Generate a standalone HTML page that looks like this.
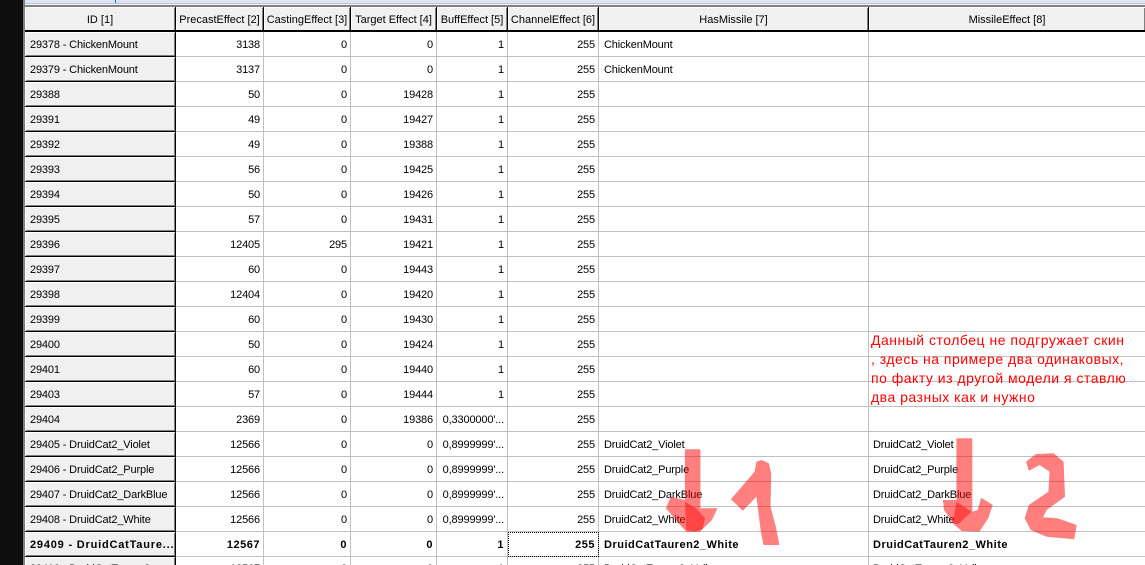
<!DOCTYPE html>
<html lang="ru"><head><meta charset="utf-8"><title>Spell Visual Table</title>
<style>
html,body{margin:0;padding:0;width:1145px;height:565px;overflow:hidden;background:#fff}
body{position:relative;font:11px/26px "Liberation Sans",sans-serif;color:#000}
#blk{position:absolute;left:0;top:0;width:23px;height:565px;background:#0f0f0f}
#edge{position:absolute;left:23px;top:0;width:2px;height:565px;background:#808080}
#top1{position:absolute;left:25px;top:0;width:1120px;height:3px;background:#dfe4f5}
#top2{position:absolute;left:25px;top:3px;width:1120px;height:1px;background:#bcc4dc}
#top3{position:absolute;left:25px;top:4px;width:1120px;height:1px;background:#f4f4f4}
#top4{position:absolute;left:23px;top:5px;width:1122px;height:2px;background:#808080}
#tick{position:absolute;left:115px;top:0;width:1px;height:3px;background:#2a6fd0}
.r{position:absolute;left:25px;width:1120px;height:25px;letter-spacing:-.15px}
.r span{position:absolute;top:0;height:24px;box-sizing:content-box;border-right:1px solid #c0c0c0;border-bottom:1px solid #c0c0c0;white-space:nowrap;overflow:hidden;text-align:right;padding:0 3px 0 0;background:#fff}
.r span:nth-child(1){left:0;width:145px;padding:0 0 0 5px;text-align:left;background:#f0f0f0;border-right:1px solid #000;border-bottom:1px solid #000;box-shadow:inset 1px 1px 0 #fff,inset -1px -1px 0 #808080}
.r span:nth-child(2){left:151px;width:84px}
.r span:nth-child(3){left:239px;width:83px}
.r span:nth-child(4){left:326px;width:82px}
.r span:nth-child(5){left:412px;width:67px}
.r span:nth-child(6){left:483px;width:87px}
.r span:nth-child(7){left:574px;width:264px;padding:0 0 0 5px;text-align:left}
.r span:nth-child(8){left:844px;width:272px;padding:0 0 0 4px;text-align:left;border-right:0}
.h{top:7px;height:25px;letter-spacing:0}
.h span,.h span:nth-child(n){top:0;height:23px;line-height:26px;padding:0;text-align:center;background:#f0f0f0;border-right:1px solid #000;border-bottom:2px solid #000;box-shadow:inset 1px 1px 0 #fff,inset -1px 0 0 #808080}
.h span:nth-child(1){width:150px}
.h span:nth-child(2){width:87px}
.h span:nth-child(3){width:86px}
.h span:nth-child(4){width:85px}
.h span:nth-child(5){width:70px}
.h span:nth-child(6){width:90px}
.h span:nth-child(7){width:269px}
.h span:nth-child(8){width:276px}
.b span{font-weight:bold;letter-spacing:.5px}
.r.b span:nth-child(1){letter-spacing:.8px}
.r.b span.f{outline:1px dotted #000;outline-offset:-1px}
.l{line-height:24px}
#note{position:absolute;left:871px;top:331px;color:#f00;font:14px/19px "Liberation Sans",sans-serif;letter-spacing:.5px;white-space:nowrap}
svg{position:absolute;left:0;top:0}
</style></head><body>
<div id="blk"></div><div id="edge"></div><div id="top1"></div><div id="top2"></div><div id="top3"></div><div id="top4"></div><div id="tick"></div>
<div class="r h"><span>ID [1]</span><span>PrecastEffect [2]</span><span>CastingEffect [3]</span><span>Target Effect [4]</span><span>BuffEffect [5]</span><span>ChannelEffect [6]</span><span>HasMissile [7]</span><span>MissileEffect [8]</span></div>
<div class="r" style="top:32px"><span>29378 - ChickenMount</span><span>3138</span><span>0</span><span>0</span><span>1</span><span>255</span><span>ChickenMount</span><span></span></div>
<div class="r" style="top:57px"><span>29379 - ChickenMount</span><span>3137</span><span>0</span><span>0</span><span>1</span><span>255</span><span>ChickenMount</span><span></span></div>
<div class="r" style="top:82px"><span>29388</span><span>50</span><span>0</span><span>19428</span><span>1</span><span>255</span><span></span><span></span></div>
<div class="r" style="top:107px"><span>29391</span><span>49</span><span>0</span><span>19427</span><span>1</span><span>255</span><span></span><span></span></div>
<div class="r" style="top:132px"><span>29392</span><span>49</span><span>0</span><span>19388</span><span>1</span><span>255</span><span></span><span></span></div>
<div class="r" style="top:157px"><span>29393</span><span>56</span><span>0</span><span>19425</span><span>1</span><span>255</span><span></span><span></span></div>
<div class="r" style="top:182px"><span>29394</span><span>50</span><span>0</span><span>19426</span><span>1</span><span>255</span><span></span><span></span></div>
<div class="r" style="top:207px"><span>29395</span><span>57</span><span>0</span><span>19431</span><span>1</span><span>255</span><span></span><span></span></div>
<div class="r" style="top:232px"><span>29396</span><span>12405</span><span>295</span><span>19421</span><span>1</span><span>255</span><span></span><span></span></div>
<div class="r" style="top:257px"><span>29397</span><span>60</span><span>0</span><span>19443</span><span>1</span><span>255</span><span></span><span></span></div>
<div class="r" style="top:282px"><span>29398</span><span>12404</span><span>0</span><span>19420</span><span>1</span><span>255</span><span></span><span></span></div>
<div class="r" style="top:307px"><span>29399</span><span>60</span><span>0</span><span>19430</span><span>1</span><span>255</span><span></span><span></span></div>
<div class="r" style="top:332px"><span>29400</span><span>50</span><span>0</span><span>19424</span><span>1</span><span>255</span><span></span><span></span></div>
<div class="r" style="top:357px"><span>29401</span><span>60</span><span>0</span><span>19440</span><span>1</span><span>255</span><span></span><span></span></div>
<div class="r" style="top:382px"><span>29403</span><span>57</span><span>0</span><span>19444</span><span>1</span><span>255</span><span></span><span></span></div>
<div class="r" style="top:407px"><span>29404</span><span>2369</span><span>0</span><span>19386</span><span>0,3300000'...</span><span>255</span><span></span><span></span></div>
<div class="r" style="top:432px"><span>29405 - DruidCat2_Violet</span><span>12566</span><span>0</span><span>0</span><span>0,8999999'...</span><span>255</span><span>DruidCat2_Violet</span><span>DruidCat2_Violet</span></div>
<div class="r" style="top:457px"><span>29406 - DruidCat2_Purple</span><span>12566</span><span>0</span><span>0</span><span>0,8999999'...</span><span>255</span><span>DruidCat2_Purple</span><span>DruidCat2_Purple</span></div>
<div class="r" style="top:482px"><span>29407 - DruidCat2_DarkBlue</span><span>12566</span><span>0</span><span>0</span><span>0,8999999'...</span><span>255</span><span>DruidCat2_DarkBlue</span><span>DruidCat2_DarkBlue</span></div>
<div class="r" style="top:507px"><span>29408 - DruidCat2_White</span><span>12566</span><span>0</span><span>0</span><span>0,8999999'...</span><span>255</span><span>DruidCat2_White</span><span>DruidCat2_White</span></div>
<div class="r b" style="top:532px"><span>29409 - DruidCatTaure...</span><span>12567</span><span>0</span><span>0</span><span>1</span><span class="f">255</span><span>DruidCatTauren2_White</span><span>DruidCatTauren2_White</span></div>
<div class="r l" style="top:557px"><span>29410 - DruidCatTauren2_...</span><span>12567</span><span>0</span><span>0</span><span>1</span><span>255</span><span>DruidCatTauren2_Yellow</span><span>DruidCatTauren2_Yellow</span></div>
<div id="note">Данный столбец не подгружает скин<br>, здесь на примере два одинаковых,<br>по факту из другой модели я ставлю<br>два разных как и нужно</div>
<svg width="1145" height="565" viewBox="0 0 1145 565" fill="#f00" fill-opacity=".5">
<path d="M684.9 449.3H700.4V508.3H717.4L712 520 699.7 531.7H686.3L678.5 523.3 666 508.3 670.7 496.7 684.9 500Z"/>
<path fill-opacity=".45" d="M684.9 501.7 696.2 508.3 705 518.3 702.6 529.3 694.4 531.7 686.3 530Z"/>
<path d="M730.9 499.3 754.6 471.7 756.4 461.7 761.7 460 768.8 463.3 771.2 473.3 770.5 506.7 775.8 526.7 779.4 545H763.5L760.6 530 756.4 496.7 742.9 510.7Z"/>
<path d="M956.4 438.3H972.3V511.7L977.6 510 981.2 497.7 992.8 505 988.2 518.3 979.4 531.7 961.7 531 954.6 525 944 510 942.9 500 956.4 500Z"/>
<path fill-opacity=".45" d="M956.4 501.7 971.6 511.7 958.1 524.3 952.8 523.3Z"/>
<path d="M1026.1 461.7 1036 454 1053.7 453.3 1063.6 461.7 1065 496.7 1046.6 510 1043.1 517.3 1057.3 518.3 1076.7 525 1074.2 539.3 1046.6 536.7 1030.7 530 1024.7 518.3 1028.9 505 1048.4 491.7 1049.5 471.7 1039.6 465 1028.9 470.7Z"/>
</svg>
</body></html>
